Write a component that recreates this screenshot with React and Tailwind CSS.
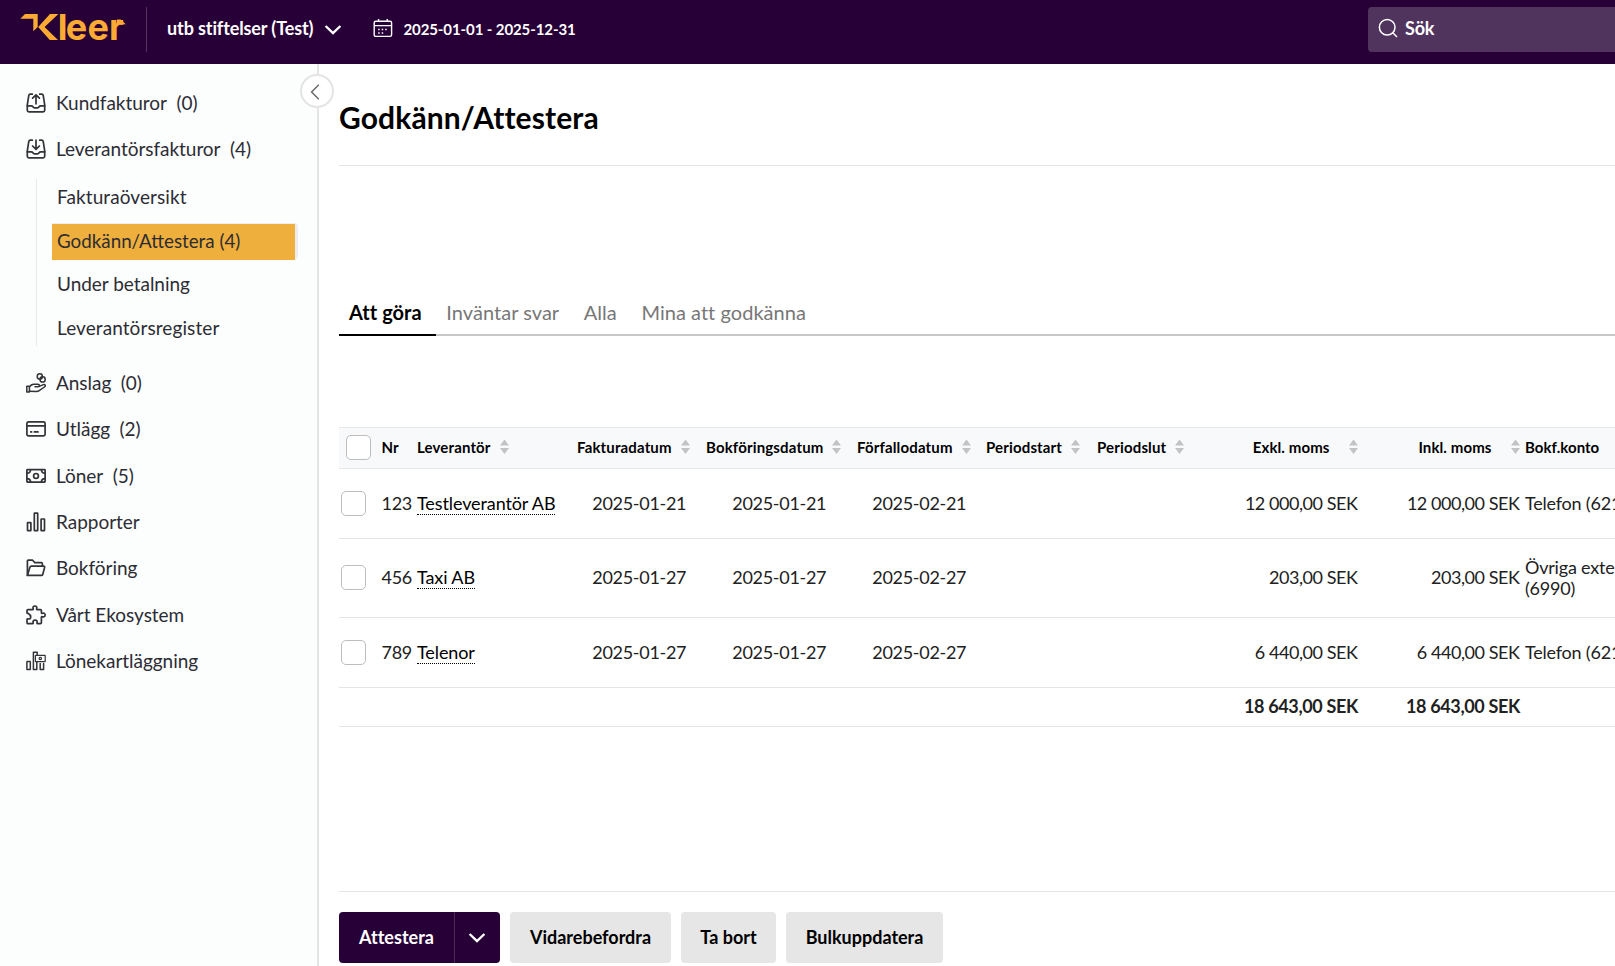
import { useState } from "react";

function Icon({ children, strokeWidth = 1.7 }) {
  return (
    <svg
      viewBox="0 0 20 20"
      className="size-5 shrink-0"
      fill="none"
      stroke="currentColor"
      strokeWidth={strokeWidth}
      strokeLinecap="round"
      strokeLinejoin="round"
    >
      {children}
    </svg>
  );
}

const tray = (
  <>
    <path d="M6.3 1.2H4.3Q3 1.2 2.8 2.4L1.3 11.8v5.4q0 1.6 1.6 1.6h14.2q1.6 0 1.6-1.6v-5.4L17.2 2.4Q17 1.2 15.7 1.2h-2" />
    <path d="M1.3 12.8h4q1 0 1.6 1t1.6 1h3q1 0 1.6-1t1.6-1h4" />
  </>
);

const icons = {
  outbox: <Icon>{tray}<path d="M10 10.8V2M6.6 5.2 10 1.8l3.4 3.4" /></Icon>,
  inbox: <Icon>{tray}<path d="M10 1.2v9M6.6 7 10 10.4 13.4 7" /></Icon>,
  hand: (
    <Icon strokeWidth={1.5}>
      <circle cx="13.8" cy="3.4" r="2.6" />
      <circle cx="16.6" cy="6.4" r="2.6" />
      <path d="M.8 13.2h2.6v5.8H.8zM3.4 14.2q1.6-3 4.4-3h4q1.6 0 1.6 1.3t-1.6 1.3H9" />
      <path d="M13.2 13.4l4.2-1.8q1.4-.4 1.8.6t-.8 1.8l-5.2 3.6q-1.2.8-2.8.8l-7-.2" />
    </Icon>
  ),
  card: (
    <Icon>
      <rect x=".9" y="2.8" width="18.2" height="14" rx="1.6" />
      <path d="M1 6.8h18M4.8 12.9h.8M8.4 12.9h3.6" />
    </Icon>
  ),
  cash: (
    <Icon>
      <rect x=".9" y="3.6" width="18.2" height="12.6" rx=".6" />
      <circle cx="10" cy="9.9" r="2.4" />
      <path d="M1 7.2q3.4 0 3.6-3.4M19 7.2q-3.4 0-3.6-3.4M1 12.6q3.4 0 3.6 3.4M19 12.6q-3.4 0-3.6 3.4" />
    </Icon>
  ),
  bars: (
    <Icon>
      <rect x="1.5" y="10.6" width="3.4" height="8" rx=".4" />
      <rect x="8.3" y="1.2" width="3.4" height="17.4" rx=".4" />
      <rect x="15.1" y="7" width="3.4" height="11.6" rx=".4" />
    </Icon>
  ),
  folder: (
    <Icon>
      <path d="M1.4 17.2V3.2q0-1 1-1h4.2l2.2 2.4h6.4q1.2 0 1.2 1.2v2.2" />
      <path d="m1.4 17.4 2.4-8q.4-1.2 1.6-1.2h12.2q1.3 0 1 1.2l-1.8 6.8q-.3 1.2-1.5 1.2z" />
    </Icon>
  ),
  puzzle: (
    <Icon>
      <path d="M2 4.6h4.6q.9 0 .5-1-.6-2.6 1.8-2.6t1.8 2.6q-.4 1 .5 1h3.2q1 0 1 1v2q0 1.1 1 .7 2.7-.7 2.7 1.7t-2.7 1.7q-1-.4-1 .7v5.2q0 1-1 1h-2.8q-.9 0-.5-1 .5-2.4-2-2.4t-2 2.4q.4 1-.5 1H2q-1 0-1-1v-3q0-1 1-.7 2.7.5 2.7-1.8T2 8.3q-1 .4-1-.7v-2q0-1 1-1z" />
    </Icon>
  ),
  barsCash: (
    <Icon strokeWidth={1.5}>
      <rect x=".9" y="10.6" width="3.4" height="8" rx=".4" />
      <path d="M11.2 1.2H7.4v17.4h3.4V11M11.2 1.2v2.6" />
      <path d="M14.2 12.4v6.2h3.4v-6.2" />
      <rect x="9.4" y="4.4" width="9.8" height="6.2" rx=".4" strokeWidth="1.2" />
      <circle cx="14.3" cy="7.5" r="1.2" strokeWidth="1.2" />
    </Icon>
  ),
};

const topMenu = [
  { label: "Kundfakturor", count: 0, icon: "outbox" },
  { label: "Leverantörsfakturor", count: 4, icon: "inbox" },
];

const subMenu = ["Fakturaöversikt", "Godkänn/Attestera (4)", "Under betalning", "Leverantörsregister"];

const bottomMenu = [
  { label: "Anslag", count: 0, icon: "hand" },
  { label: "Utlägg", count: 2, icon: "card" },
  { label: "Löner", count: 5, icon: "cash" },
  { label: "Rapporter", icon: "bars" },
  { label: "Bokföring", icon: "folder" },
  { label: "Vårt Ekosystem", icon: "puzzle" },
  { label: "Lönekartläggning", icon: "barsCash" },
];

const tabs = ["Att göra", "Inväntar svar", "Alla", "Mina att godkänna"];

const invoices = [
  { nr: "123", supplier: "Testleverantör AB", date: "2025-01-21", booked: "2025-01-21", due: "2025-02-21", amount: "12 000,00 SEK", account: "Telefon (6212)", height: "h-[70px]" },
  { nr: "456", supplier: "Taxi AB", date: "2025-01-27", booked: "2025-01-27", due: "2025-02-27", amount: "203,00 SEK", account: "Övriga externa kostnader (6990)", height: "h-[79px] pb-px" },
  { nr: "789", supplier: "Telenor", date: "2025-01-27", booked: "2025-01-27", due: "2025-02-27", amount: "6 440,00 SEK", account: "Telefon (6212)", height: "h-[70px]" },
];

// the last column runs past the right edge of the window
const columns = "grid grid-cols-[42px_36px_160px_129px_151px_129px_111px_103px_163px_162px_210px] items-center";

function Logo() {
  return (
    <svg viewBox="0 0 108 30" className="w-[108px] h-[30px] shrink-0 overflow-visible" fill="#fbab33" aria-label="Kleer">
      <path d="M.3 6.7 5 2h12.7v13l-4.4 4.2V6.7z" />
      <path d="M30 2h8.4L24.6 15l13.4 13h-8.2L18.2 15z" />
      <text y="28" x="37.7 45.8 67.6 89" fontSize="36" fontWeight="700" fontFamily="Inter, sans-serif">leer</text>
      <path d="M97 7.4h3.6l5.2 4.8H97z" />
    </svg>
  );
}

function Header() {
  return (
    <header className="flex items-center h-16 pb-1.5 bg-[#270037] text-white shrink-0">
      <div className="ml-5 mt-[-4px]"><Logo /></div>
      <div className="ml-[18px] h-[45px] w-px bg-[#533560]" />
      <button className="ml-5 flex items-center text-[18px] font-bold whitespace-nowrap [font-variant-ligatures:none] tracking-[-0.11px]">
        <span className="mt-[-2px]">utb stiftelser (Test)</span>
        <svg viewBox="0 0 18 12" className="ml-[11px] mt-[2px] w-[18px] h-3" fill="none" stroke="currentColor" strokeWidth="2.4">
          <path d="m1.6 2 7.4 7.2L16.4 2" />
        </svg>
      </button>
      <div className="ml-[31px] flex items-center text-[15px] font-bold whitespace-nowrap tracking-[-0.1px]">
        <svg viewBox="0 0 20 20" className="size-5 mr-[10px] mt-[-2px]" fill="none" stroke="currentColor" strokeWidth="1.4">
          <rect x="1.2" y="3.2" width="17.4" height="15.2" rx="1.6" />
          <path d="M1.2 7.6h17.4M5.6 1v2.4M14.2 1v2.4" />
          <path d="M5.2 11.4h10M5.2 14.9h6" strokeWidth="1.5" strokeDasharray="1.5 2" />
        </svg>
        <span>2025-01-01 - 2025-12-31</span>
      </div>
      <div className="ml-auto flex items-center w-[247px] h-[45px] pl-[10px] rounded-l bg-[#51345e] text-[18px] font-bold">
        <svg viewBox="0 0 20 20" className="size-5 mr-[7px] mt-[-2px]" fill="none" stroke="currentColor" strokeWidth="1.5">
          <circle cx="9.2" cy="9.2" r="7.8" />
          <path d="m14.8 14.8 4.2 4.2" />
        </svg>
        <span className="tracking-[-0.2px] mt-[-1px]">Sök</span>
      </div>
    </header>
  );
}

function MenuItem({ label, count, icon }) {
  return (
    <a className="flex items-center h-[46.33px] pl-[26px] cursor-pointer">
      <span className="text-[#333338]">{icons[icon]}</span>
      <span className="ml-[10px]">{label}</span>
      {count !== undefined && <span className="ml-[9.5px]">({count})</span>}
    </a>
  );
}

function Sidebar() {
  return (
    <aside className="relative w-[319px] shrink-0 pt-[15.5px] border-r-2 border-[#e5e5e5] bg-[#fcfdfd] text-[19px] leading-[24px] text-[#2c2c34] tracking-[-0.03px]">
      {topMenu.map((item) => (
        <MenuItem key={item.label} {...item} />
      ))}
      <div className="mt-[7px] mb-[13.6px] ml-9 pl-[15px] h-[167px] border-l border-[#ebe7ee] flex flex-col justify-between">
        {subMenu.map((label, i) => (
          <a key={label} className={`mr-[19px] h-9 flex cursor-pointer ${i === 1 ? "rounded-r bg-[#eeebf2]" : ""}`}>
            <span className={`w-[243px] h-9 pl-[5px] flex items-center ${i === 1 ? "mt-px pb-[2px] bg-[#efaf3c] text-[18.8px] tracking-normal" : i === 2 ? "" : "tracking-[0.09px]"}`}>{label}</span>
          </a>
        ))}
      </div>
      {bottomMenu.map((item) => (
        <MenuItem key={item.label} {...item} />
      ))}
      <button className="absolute top-[10px] left-[300px] size-[34px] rounded-full border-2 border-[#e4e4e4] bg-white flex items-center justify-center">
        <svg viewBox="0 0 10 16" className="w-[10px] h-4 mr-[4px] mt-px" fill="none" stroke="#6b6b6b" strokeWidth="1.5">
          <path d="M8.8.8 1.6 8l7.2 7.2" />
        </svg>
      </button>
    </aside>
  );
}

function SortIcon() {
  return (
    <svg viewBox="0 0 9 16" className="w-[9px] h-4 mt-[-1px] shrink-0" fill="#c3c3c3">
      <path d="M4.5.4 9 6.4H0zM0 9h9l-4.5 6z" />
    </svg>
  );
}

function Checkbox() {
  return <span className="block size-[25px] rounded-[5px] border border-[#bdbdbd] bg-white" />;
}

function SortHeader({ children, right }) {
  return (
    <div className={right ? "flex items-center justify-end gap-[19.5px] pr-[5px] tracking-[0.1px]" : "flex items-center gap-[9px]"}>
      <span>{children}</span>
      <SortIcon />
    </div>
  );
}

function InvoiceTable() {
  return (
    <div className="w-[1396px] text-[18px] leading-[21px] text-[#212121]">
      <div className={`${columns} h-[42px] pb-[2px] border-y border-[#e5e7e9] bg-[#f8f9fb] text-[15px] font-bold text-black tracking-[0.15px]`}>
        <div className="pl-[7px]"><Checkbox /></div>
        <div className="pl-[0.5px]">Nr</div>
        <SortHeader>Leverantör</SortHeader>
        <SortHeader>Fakturadatum</SortHeader>
        <SortHeader>Bokföringsdatum</SortHeader>
        <SortHeader>Förfallodatum</SortHeader>
        <SortHeader>Periodstart</SortHeader>
        <SortHeader>Periodslut</SortHeader>
        <SortHeader right>Exkl. moms</SortHeader>
        <SortHeader right>Inkl. moms</SortHeader>
        <div className="tracking-[0.05px]">Bokf.konto</div>
      </div>
      {invoices.map((row) => (
        <div key={row.nr} className={`${columns} ${row.height} border-b border-[#e5e5e5] tracking-[-0.3px]`}>
          <div className="pl-[2px]"><Checkbox /></div>
          <div className="pl-[0.5px]">{row.nr}</div>
          <div><a className="border-b border-dotted border-black text-black tracking-[-0.1px] cursor-pointer">{row.supplier}</a></div>
          <div className="pr-[4.5px] text-center">{row.date}</div>
          <div className="pr-[4.5px] text-center">{row.booked}</div>
          <div className="pr-[4.5px] text-center">{row.due}</div>
          <div />
          <div />
          <div className="pr-[5.5px] text-right tracking-[-0.45px]">{row.amount}</div>
          <div className="pr-[5.5px] text-right tracking-[-0.45px]">{row.amount}</div>
          <div className="tracking-[-0.2px]">{row.account}</div>
        </div>
      ))}
      <div className={`${columns} h-[39px] pb-[2px] border-b border-[#e5e5e5] font-bold tracking-[-0.35px]`}>
        <div className="col-start-9 pr-[5px] text-right">18 643,00 SEK</div>
        <div className="pr-[5px] text-right">18 643,00 SEK</div>
      </div>
    </div>
  );
}

function Actions() {
  return (
    <div className="mt-auto mb-[3px] pt-5 border-t border-[#e5e5e5] flex gap-[10px] text-[18px] font-bold [font-variant-ligatures:none] whitespace-nowrap">
      <div className="flex h-[51px] w-[161px] rounded bg-[#270037] text-white overflow-hidden">
        <button className="w-[115px] text-center">Attestera</button>
        <button className="flex-1 pr-[2px] border-l border-[#4a2b58] flex items-center justify-center">
          <svg viewBox="0 0 18 12" className="w-[18px] h-3" fill="none" stroke="currentColor" strokeWidth="2.4">
            <path d="m1.6 2 7.4 7.2L16.4 2" />
          </svg>
        </button>
      </div>
      <button className="h-[51px] w-[161px] rounded bg-[#e6e6e6] text-black">Vidarebefordra</button>
      <button className="h-[51px] w-[95px] rounded bg-[#e6e6e6] text-black">Ta bort</button>
      <button className="h-[51px] w-[157px] rounded bg-[#e6e6e6] text-black">Bulkuppdatera</button>
    </div>
  );
}

function App() {
  const [activeTab, setActiveTab] = useState("Att göra");

  return (
    <div className="h-[966px] w-full flex flex-col overflow-hidden bg-white font-['Lato',sans-serif]">
      <Header />
      <div className="flex flex-1 min-h-0">
        <Sidebar />
        <main className="flex-1 min-w-0 pl-5 flex flex-col overflow-hidden">
          <h1 className="h-[102px] pb-[1px] pt-[6px] flex items-center border-b border-[#e5e5e5] text-[30px] font-bold text-black tracking-[0.12px] shrink-0">
            Godkänn/Attestera
          </h1>
          <div className="mt-[124px] h-[46px] flex border-b-2 border-[#c8c8c8] text-[20px] text-[#777] tracking-[0.04px] whitespace-nowrap shrink-0">
            {tabs.map((tab) => (
              <button
                key={tab}
                onClick={() => setActiveTab(tab)}
                className={`h-[46px] pl-[10px] pr-[14.6px] pb-px border-b-2 cursor-pointer ${activeTab === tab ? "border-black text-black font-bold" : "border-transparent"}`}
              >
                {tab}
              </button>
            ))}
          </div>
          <div className="mt-[91px] shrink-0">
            <InvoiceTable />
          </div>
          <Actions />
        </main>
      </div>
    </div>
  );
}

export default App;
